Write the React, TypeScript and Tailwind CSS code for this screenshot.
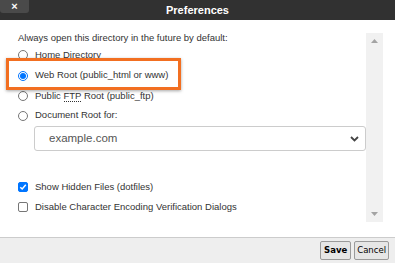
import React from "react";

const font = { fontFamily: '"Liberation Sans", Arial, sans-serif' };

function Radio({ checked = false }: { checked?: boolean }) {
  return (
    <span
      className={
        "flex h-[10px] w-[10px] shrink-0 items-center justify-center rounded-full border " +
        (checked ? "border-[#0075ff] bg-white" : "border-[#767676] bg-white")
      }
    >
      {checked && <span className="h-[6px] w-[6px] rounded-full bg-[#0075ff]" />}
    </span>
  );
}

function Checkbox({ checked = false }: { checked?: boolean }) {
  return (
    <span
      className={
        "flex h-[10px] w-[10px] shrink-0 items-center justify-center rounded-[2px] border " +
        (checked ? "border-[#0075ff] bg-[#0075ff]" : "border-[#767676] bg-white")
      }
    >
      {checked && (
        <svg width="8" height="8" viewBox="0 0 8 8">
          <path d="M1.3 4.2 L3.2 6 L6.8 1.8" stroke="white" strokeWidth="1.5" fill="none" />
        </svg>
      )}
    </span>
  );
}

export default function App() {
  return (
    <div
      className="relative flex h-[263px] w-[395px] flex-col overflow-hidden bg-white"
      style={font}
    >
      {/* ================= TITLE BAR ================= */}
      <div className="relative flex h-[20px] shrink-0 items-center justify-center bg-[#313131]">
        <button className="absolute left-0 top-0 flex h-[13px] w-[29px] items-center justify-center rounded-b-[3px] bg-[#4a4a4a] text-[11px] font-bold leading-none text-white">
          ×
        </button>
        <span className="text-[11px] font-bold text-white">Preferences</span>
      </div>

      {/* ================= BODY ================= */}
      <div className="flex flex-1">
        <div className="flex-1 pl-[18px] pt-[11px] text-[9.5px] text-[#333]">
          <p className="h-[13px] leading-[13px]">
            Always open this directory in the future by default:
          </p>

          <div className="mt-[1px] flex flex-col">
            <label className="flex h-[20px] items-center gap-[7px]">
              <Radio />
              <span>Home Directory</span>
            </label>
            <label className="flex h-[21px] items-center gap-[7px]">
              <Radio checked />
              <span>Web Root (public_html or www)</span>
            </label>
            <label className="flex h-[20px] items-center gap-[7px]">
              <Radio />
              <span>
                Public{" "}
                <abbr className="no-underline border-b border-dotted border-[#333]">FTP</abbr>{" "}
                Root (public_ftp)
              </span>
            </label>
            <label className="flex h-[19px] items-center gap-[7px]">
              <Radio />
              <span>Document Root for:</span>
            </label>
          </div>

          <div className="ml-[16px] mt-[1px] flex h-[25px] items-center justify-between rounded-[3px] border border-[#cccccc] pl-[14px] pr-[6px] text-[11.5px] text-[#555]">
            <span>example.com</span>
            <svg width="9" height="6" viewBox="0 0 9 6">
              <path d="M1 1 L4.5 4.5 L8 1" stroke="#444" strokeWidth="1.8" fill="none" />
            </svg>
          </div>

          <div className="mt-[26px] flex flex-col">
            <label className="flex h-[20px] items-center gap-[7px]">
              <Checkbox checked />
              <span>Show Hidden Files (dotfiles)</span>
            </label>
            <label className="flex h-[20px] items-center gap-[7px]">
              <Checkbox />
              <span>Disable Character Encoding Verification Dialogs</span>
            </label>
          </div>
        </div>

        {/* scrollbar */}
        <div className="mb-[15px] mr-[12px] mt-[13px] flex w-[17px] flex-col items-center justify-between bg-[#f1f1f1] py-[6px]">
          <svg width="7" height="4" viewBox="0 0 7 4">
            <path d="M0 4 L3.5 0 L7 4 Z" fill="#a3a3a3" />
          </svg>
          <svg width="7" height="4" viewBox="0 0 7 4">
            <path d="M0 0 L3.5 4 L7 0 Z" fill="#a3a3a3" />
          </svg>
        </div>
      </div>

      {/* ================= FOOTER ================= */}
      <div
        className="flex h-[26px] shrink-0 items-center justify-end gap-[3px] border-t border-[#cccccc] bg-[#eeeeee] pr-[6px] text-[8.5px] text-black"
        style={{ fontFamily: '"DejaVu Sans", Verdana, sans-serif' }}
      >
        <button className="h-[19px] rounded-[2px] border border-[#9a9a9a] bg-[#e6e6e6] px-[3px] font-bold">
          Save
        </button>
        <button className="h-[19px] rounded-[2px] border border-[#9a9a9a] bg-[#e6e6e6] px-[2px]">
          Cancel
        </button>
      </div>

      {/* highlight annotation */}
      <div className="pointer-events-none absolute left-[6px] top-[58px] h-[32px] w-[175px] border-[3px] border-[#f26f21] shadow-[0_1px_3px_rgba(0,0,0,0.35)]" />
    </div>
  );
}
